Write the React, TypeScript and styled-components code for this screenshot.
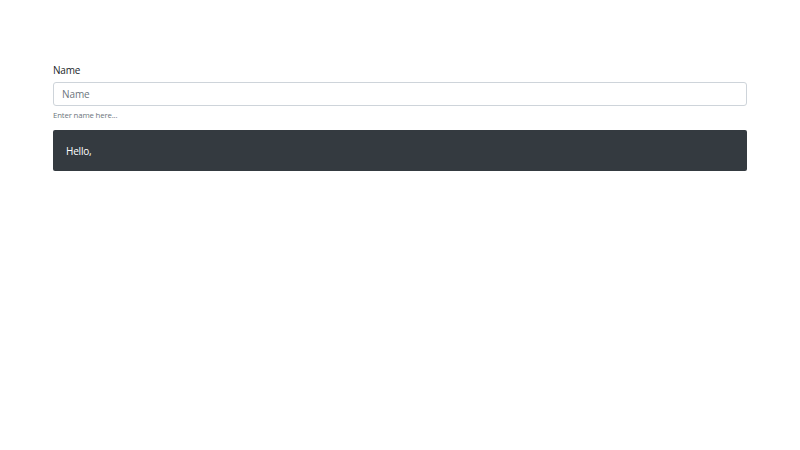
import styled, { createGlobalStyle } from 'styled-components';

const GlobalStyle = createGlobalStyle`
  html, body {
    margin: 0;
    padding: 0;
    background: #ffffff;
    font-family: "Open Sans", "Noto Sans", "Liberation Sans", sans-serif;
    color: #212529;
  }
  * {
    box-sizing: border-box;
  }
`;

const Container = styled.div`
  width: 694px;
  margin: 0 auto;
  padding-top: 63px;
`;

const FormGroup = styled.div`
  display: flex;
  flex-direction: column;
  margin-bottom: 9px;
`;

const Label = styled.label`
  font-size: 10px;
  letter-spacing: -0.2px;
  line-height: 14px;
  margin-bottom: 5px;
  color: #212529;
`;

const Input = styled.input`
  height: 24px;
  width: 100%;
  padding: 0 8px;
  font-family: inherit;
  font-size: 10px;
  letter-spacing: -0.1px;
  color: #495057;
  border: 1px solid #ced4da;
  border-radius: 3px;
  background: #fff;
  outline: none;

  &::placeholder {
    color: #6c757d;
  }
`;

const HelpText = styled.small`
  margin-top: 3px;
  font-size: 7.8px;
  letter-spacing: -0.15px;
  line-height: 12px;
  color: #6c757d;
`;

const Greeting = styled.div`
  height: 41px;
  display: flex;
  align-items: center;
  padding: 0 13px;
  background: #343a40;
  color: #ffffff;
  font-size: 10px;
  letter-spacing: -0.2px;
  border-radius: 2px;
`;

export default function App() {
  return (
    <>
      <GlobalStyle />
      <Container>
        <FormGroup>
          <Label htmlFor="name">Name</Label>
          <Input id="name" type="text" placeholder="Name" />
          <HelpText>Enter name here...</HelpText>
        </FormGroup>
        <Greeting>Hello,</Greeting>
      </Container>
    </>
  );
}
